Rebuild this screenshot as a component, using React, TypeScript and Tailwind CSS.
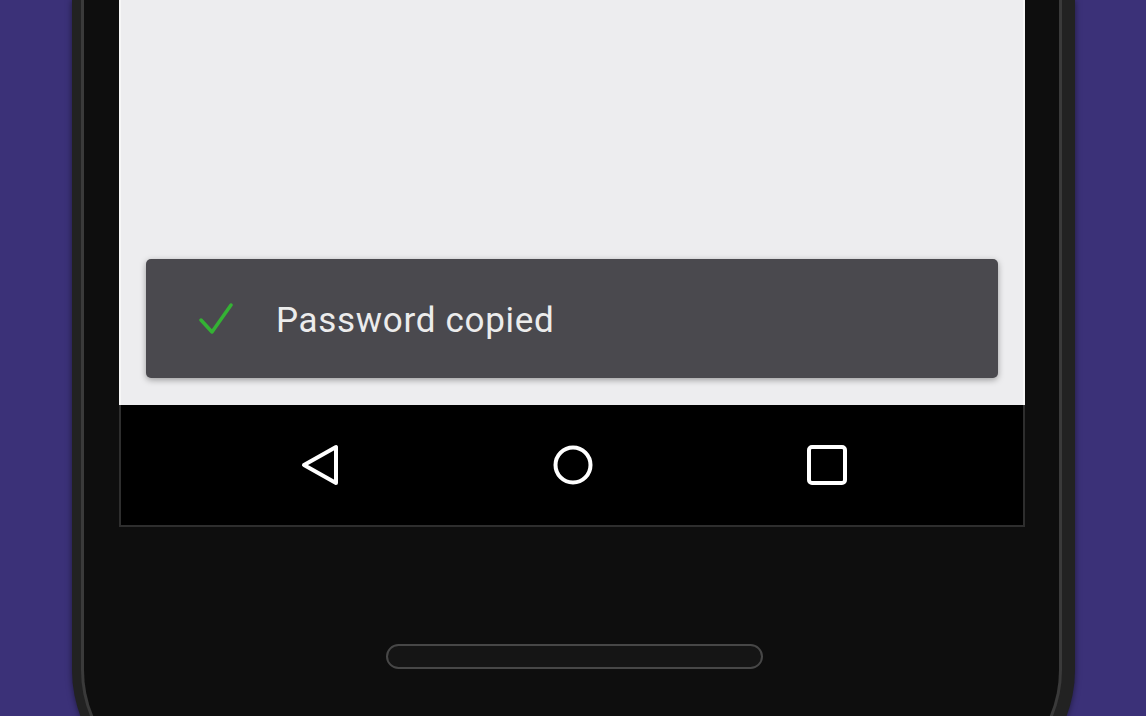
export default function App() {
  return (
    <div
      className="h-[716px] w-[1146px] overflow-hidden bg-[#3b3178]"
      style={{ fontFamily: 'Roboto, "Liberation Sans", sans-serif' }}
    >
      {/* phone frame */}
      <div className="ml-[72px] h-[800px] w-[1003px] rounded-b-[130px] bg-[#222222] pl-[9px] pr-[13px] pb-[8px] shadow-[0_0_6px_rgba(0,0,0,0.5)]">
        <div className="h-full rounded-b-[122px] border-x-[3px] border-b-[3px] border-[#3a3a3a] bg-[#0e0e0e] pl-[35px] pr-[34px]">
          {/* screen */}
          <div className="flex h-[405px] flex-col justify-end border-x-[2px] border-[#f7f7f7] bg-[#ededef] px-[25px] pb-[27px]">
            <div className="flex h-[119px] items-center rounded-[5px] bg-[#4a494e] pl-[53px] shadow-[0_2px_6px_rgba(0,0,0,0.35)]">
              <svg width="34" height="31" viewBox="0 0 34 31" fill="none">
                <path
                  d="M2 17 L13 29 L32 2"
                  stroke="#34b234"
                  strokeWidth="3.5"
                  strokeLinecap="round"
                  strokeLinejoin="round"
                />
              </svg>
              <span className="ml-[43px] mt-[3px] text-[35px] leading-none tracking-[0.7px] text-[#ececec]">
                Password copied
              </span>
            </div>
          </div>
          {/* nav bar */}
          <div className="flex h-[122px] items-center justify-center gap-[214px] border-x-[2px] border-b-[2px] border-[#2e2e2e] bg-black pl-[4px]">
            <svg width="38" height="42" viewBox="0 0 38 42" fill="none">
              <path
                d="M35 3 L35 39 L3 21 Z"
                stroke="white"
                strokeWidth="4"
                strokeLinejoin="round"
              />
            </svg>
            <svg width="40" height="40" viewBox="0 0 40 40" fill="none">
              <circle cx="20" cy="20" r="17.5" stroke="white" strokeWidth="4" />
            </svg>
            <svg width="40" height="40" viewBox="0 0 40 40" fill="none">
              <rect
                x="2"
                y="2"
                width="36"
                height="36"
                rx="3"
                stroke="white"
                strokeWidth="4"
              />
            </svg>
          </div>
          {/* speaker */}
          <div className="flex justify-center pt-[117px]">
            <div className="ml-[4px] h-[25px] w-[377px] rounded-full border-[2px] border-[#474747] bg-[#151515]" />
          </div>
        </div>
      </div>
    </div>
  );
}
